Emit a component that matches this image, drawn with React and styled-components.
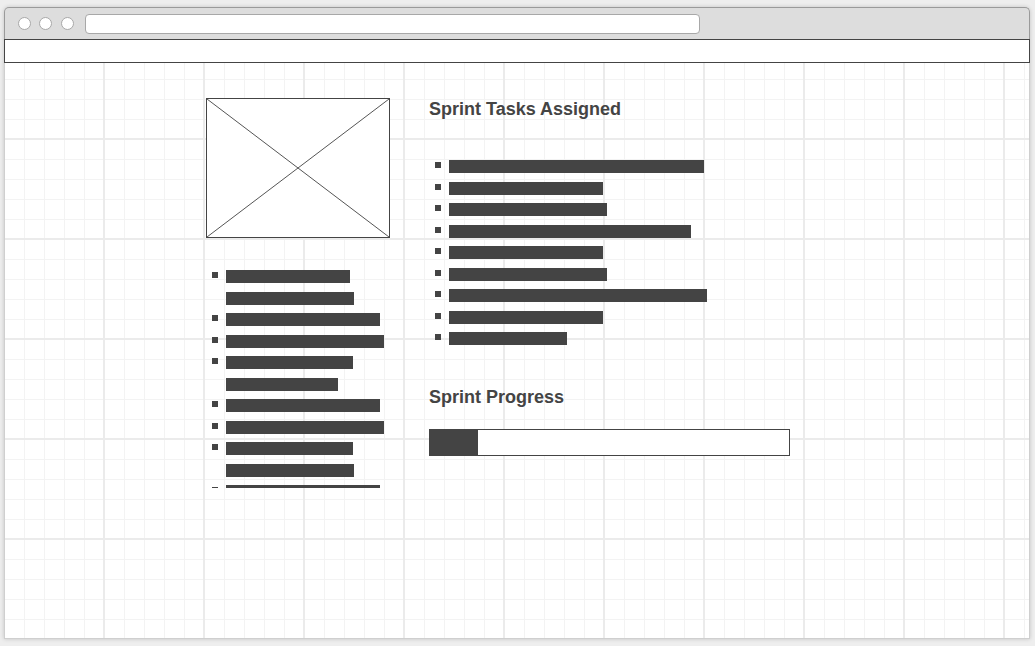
import React from "react";
import styled, { createGlobalStyle } from "styled-components";

const Global = createGlobalStyle`
  html, body { margin: 0; padding: 0; }
  body {
    background: #eeeeee;
    font-family: "Liberation Sans", Arial, sans-serif;
    width: 1035px;
    height: 646px;
    overflow: hidden;
  }
`;

const Page = styled.div`
  padding: 7px 0 0 4px;
`;

const Window = styled.div`
  width: 1026px;
  display: flex;
  flex-direction: column;
  box-shadow: 0 0 4px rgba(0, 0, 0, 0.18);
  border-radius: 5px 5px 0 0;
`;

const TitleBar = styled.div`
  height: 31px;
  background: #dddddd;
  border: 1px solid #9a9a9a;
  border-bottom: none;
  border-radius: 5px 5px 0 0;
  display: flex;
  align-items: center;
  padding-left: 12.5px;
`;

const Dot = styled.span`
  width: 11px;
  height: 11px;
  border-radius: 50%;
  background: #ffffff;
  border: 1px solid #a8a8a8;
  margin-right: 8.6px;
  flex: none;
`;

const UrlBar = styled.div`
  margin-left: 3px;
  width: 613px;
  height: 18px;
  background: #ffffff;
  border: 1px solid #a8a8a8;
  border-radius: 4px;
`;

const Nav = styled.div`
  height: 22px;
  background: #ffffff;
  border: 1px solid #444444;
`;

const Body = styled.div`
  height: 576px;
  box-sizing: border-box;
  border: 1px solid #cfcfcf;
  border-top: none;
  background-color: #ffffff;
  background-image:
    linear-gradient(to right, #ebebeb 2px, transparent 2px),
    linear-gradient(to bottom, #ebebeb 2px, transparent 2px),
    linear-gradient(to right, #f3f3f3 1px, transparent 1px),
    linear-gradient(to bottom, #f3f3f3 1px, transparent 1px);
  background-size: 100px 100px, 100px 100px, 20px 20px, 20px 20px;
  background-position: 98px 0, 0 75px, 19px 0, 0 16px;
  display: flex;
  align-items: flex-start;
  gap: 39px;
  padding: 35px 0 0 201px;
`;

const LeftColumn = styled.div`
  width: 184px;
  display: flex;
  flex-direction: column;
`;

const ImagePlaceholder = styled.div`
  width: 184px;
  height: 140px;
  box-sizing: border-box;
  border: 1px solid #444444;
  background: #ffffff;
  svg { display: block; }
`;

const List = styled.ul`
  list-style: none;
  margin: ${(p) => p.$top}px 0 0 0;
  padding: 0 0 0 6px;
  height: ${(p) => (p.$clip ? `${p.$clip}px` : "auto")};
  overflow: hidden;
`;

const Item = styled.li`
  display: flex;
  align-items: flex-start;
  gap: 8px;
`;

const Bullet = styled.span`
  width: 6px;
  height: 6px;
  background: #444444;
  margin-top: 6.25px;
  flex: none;
`;

const Lines = styled.div`
  display: flex;
  flex-direction: column;
`;

const Line = styled.div`
  height: 21.5px;
  display: flex;
  align-items: center;
`;

const Bar = styled.span`
  display: block;
  height: 13px;
  background: #444444;
`;

const RightColumn = styled.div`
  display: flex;
  flex-direction: column;
`;

const Heading = styled.h2`
  margin: ${(p) => p.$top || 0}px 0 0 0;
  font-size: 18px;
  line-height: 20px;
  font-weight: bold;
  color: #444444;
`;

const Progress = styled.div`
  margin-top: 22.5px;
  width: 361px;
  height: 27px;
  box-sizing: border-box;
  border: 1px solid #444444;
  background: #ffffff;
`;

const ProgressFill = styled.div`
  height: 100%;
  background: #444444;
`;

const leftItems = [
  [124, 128],
  [154],
  [158],
  [127, 112],
  [154],
  [158],
  [127, 128],
  [154],
  [158],
];

const rightItems = [[255], [154], [158], [242], [154], [158], [258], [154], [118]];

function BulletList({ items, top, clip }) {
  return (
    <List $top={top} $clip={clip}>
      {items.map((lines, i) => (
        <Item key={i}>
          <Bullet />
          <Lines>
            {lines.map((w, j) => (
              <Line key={j}>
                <Bar style={{ width: w }} />
              </Line>
            ))}
          </Lines>
        </Item>
      ))}
    </List>
  );
}

export default function App() {
  return (
    <Page>
      <Global />
      <Window>
        <TitleBar>
          <Dot />
          <Dot />
          <Dot />
          <UrlBar />
        </TitleBar>
        <Nav />
        <Body>
          <LeftColumn>
            <ImagePlaceholder>
              <svg width="182" height="138" viewBox="0 0 182 138">
                <line x1="0" y1="0" x2="182" y2="138" stroke="#555" strokeWidth="1" />
                <line x1="182" y1="0" x2="0" y2="138" stroke="#555" strokeWidth="1" />
              </svg>
            </ImagePlaceholder>
            <BulletList items={leftItems} top={28} clip={222} />
          </LeftColumn>
          <RightColumn>
            <Heading $top={1}>Sprint Tasks Assigned</Heading>
            <BulletList items={rightItems} top={37} />
            <Heading $top={37}>Sprint Progress</Heading>
            <Progress>
              <ProgressFill style={{ width: `${(48 / 359) * 100}%` }} />
            </Progress>
          </RightColumn>
        </Body>
      </Window>
    </Page>
  );
}
